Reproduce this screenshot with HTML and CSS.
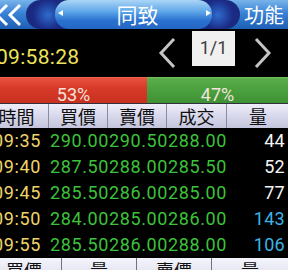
FILE: index.html
```html
<!DOCTYPE html>
<html>
<head>
<meta charset="utf-8">
<link rel="stylesheet" href="styles.css">
</head>
<body>
<div class="screen">
  <div class="topbar">
    <svg class="back" width="24" height="29" viewBox="0 0 24 29"><polyline points="7,5 -3,15 7,25" fill="none" stroke="#fff" stroke-width="3"/><polyline points="20,5 10,15 20,25" fill="none" stroke="#fff" stroke-width="3"/></svg>
    <div class="nav">
      <div class="pill">
        <span class="tri left"></span>
        <span class="title">同致</span>
        <span class="tri right"></span>
      </div>
    </div>
    <span class="func">功能</span>
  </div>
  <div class="clockbar">
    <span class="clock">09:58:28</span>
    <div class="pager">
      <svg class="chev" width="18" height="30" viewBox="0 0 18 30"><polyline points="16,1 3,15 16,29" fill="none" stroke="#c4c4c4" stroke-width="3"/></svg>
      <span class="page">1/1</span>
      <svg class="chev" width="18" height="30" viewBox="0 0 18 30"><polyline points="2,1 15,15 2,29" fill="none" stroke="#c4c4c4" stroke-width="3"/></svg>
    </div>
  </div>
  <div class="ratio">
    <div class="buy" style="width:147px">53%</div>
    <div class="sell">47%</div>
  </div>
  <div class="table">
    <div class="row head">
      <span>時間</span><span>買價</span><span>賣價</span><span>成交</span><span>量</span>
    </div>
    <div class="row data">
      <span class="t">09:35</span><span class="p">290.00</span><span class="p">290.50</span><span class="p">288.00</span><span class="q">44</span>
    </div>
    <div class="row data">
      <span class="t">09:40</span><span class="p">287.50</span><span class="p">288.00</span><span class="p">285.50</span><span class="q">52</span>
    </div>
    <div class="row data">
      <span class="t">09:45</span><span class="p">285.50</span><span class="p">286.00</span><span class="p">285.00</span><span class="q">77</span>
    </div>
    <div class="row data">
      <span class="t">09:50</span><span class="p">284.00</span><span class="p">285.00</span><span class="p">286.00</span><span class="q blue">143</span>
    </div>
    <div class="row data">
      <span class="t">09:55</span><span class="p">285.50</span><span class="p">286.00</span><span class="p">288.00</span><span class="q blue">106</span>
    </div>
  </div>
  <div class="bottom">
    <span>買價</span><span>量</span><span>賣價</span><span>量</span>
  </div>
</div>
</body>
</html>
```
FILE: styles.css
```css
html, body {
  margin: 0;
  padding: 0;
  background: #000;
}
.screen {
  width: 288px;
  height: 270px;
  overflow: hidden;
  background: #000;
  font-family: Roboto, "Noto Sans CJK TC", sans-serif;
}
.topbar {
  height: 29px;
  display: flex;
  align-items: center;
  background: linear-gradient(#78b4ea 0%, #3a82d6 45%, #1c5eb4 100%);
  position: relative;
}
.back {
  flex: none;
  margin-left: 0;
}
.nav {
  flex: none;
  margin-left: 2px;
  width: 214px;
  height: 29px;
  border-radius: 15px;
  background: radial-gradient(circle at 22px 15px, #2f6ccc 0, #1b2e8a 14px, #1a2a80 16px) left / 50% 100% no-repeat,
              radial-gradient(circle at calc(100% - 22px) 15px, #2f6ccc 0, #1b2e8a 14px, #1a2a80 16px) right / 50% 100% no-repeat;
  display: flex;
  align-items: center;
}
.pill {
  margin-left: 29px;
  width: 157px;
  height: 29px;
  border-radius: 14px;
  background: linear-gradient(#aad6f6 0%, #5ea6e8 40%, #2a72d0 70%, #2466c4 100%);
  display: flex;
  align-items: center;
  position: relative;
}
.tri {
  width: 0;
  height: 0;
  border-top: 3.5px solid transparent;
  border-bottom: 3.5px solid transparent;
  position: absolute;
  top: 10px;
}
.tri.left {
  left: 3px;
  border-right: 5px solid #fff;
}
.tri.right {
  right: 1px;
  border-left: 5px solid #fff;
}
.title {
  flex: 1;
  text-align: center;
  padding-left: 8px;
  color: #fff;
  font-family: "Noto Sans CJK TC", sans-serif;
  font-size: 21px;
  line-height: 29px;
}
.func {
  margin-left: 4px;
  color: #fff;
  font-family: "Noto Sans CJK TC", sans-serif;
  font-size: 20px;
  line-height: 29px;
}
.clockbar {
  height: 48px;
  display: flex;
  align-items: center;
  justify-content: space-between;
}
.clock {
  margin-left: -4px;
  margin-top: 8px;
  color: #ece45a;
  font-size: 21px;
  letter-spacing: 0.3px;
}
.pager {
  display: flex;
  align-items: flex-start;
  height: 48px;
  margin-right: 16px;
}
.chev {
  margin-top: 9px;
}
.page {
  margin: 2px 19px 0 16px;
  width: 43px;
  height: 35px;
  background: #f0f0f0;
  color: #404040;
  font-size: 18px;
  line-height: 33px;
  text-align: center;
}
.ratio {
  height: 26px;
  display: flex;
  font-size: 18px;
  color: #f4e4dc;
  line-height: 33px;
  text-align: center;
}
.buy {
  flex: none;
  background: linear-gradient(#e85240 0%, #d83a28 40%, #c83020 100%);
  border-top: 1px solid #f06050;
  box-sizing: border-box;
}
.sell {
  flex: 1;
  background: linear-gradient(#5cae4c 0%, #4aa03e 50%, #3e9034 100%);
  border-top: 1px solid #70c060;
  box-sizing: border-box;
}
.table {
  margin-left: -15px;
  width: 304px;
}
.row {
  display: grid;
  grid-template-columns: 64px 59px 59px 60px 62px;
}
.head {
  height: 25px;
  background: linear-gradient(#eeeefa 0%, #d8d8ec 50%, #c4c4dc 100%);
  border-top: 1px solid #303040;
  box-sizing: border-box;
  font-family: "Noto Sans CJK TC", sans-serif;
  font-size: 18px;
  line-height: 24px;
  color: #101010;
}
.head span {
  text-align: center;
  border-right: 1px solid #8a8aa2;
}
.head span:last-child {
  border-right: none;
}
.data {
  height: 26px;
  font-size: 18px;
  line-height: 26px;
  letter-spacing: 0.6px;
}
.data .t {
  color: #f0d46a;
  text-align: center;
}
.data .p {
  color: #3cc23a;
  white-space: nowrap;
  padding-left: 1px;
}
.data .q {
  color: #f4f4f4;
  text-align: right;
  padding-right: 4px;
  letter-spacing: 0.3px;
}
.data .q.blue {
  color: #3cb2e6;
}
.bottom {
  margin-left: -13px;
  width: 301px;
  height: 24px;
  display: grid;
  grid-template-columns: 75px 75px 75px 76px;
  background: linear-gradient(#f4f4fc 0%, #dcdcec 100%);
  font-family: "Noto Sans CJK TC", sans-serif;
  font-size: 18px;
  line-height: 24px;
  color: #101010;
}
.bottom span {
  text-align: center;
  border-right: 1px solid #707080;
}
.bottom span:last-child {
  border-right: none;
}
```
